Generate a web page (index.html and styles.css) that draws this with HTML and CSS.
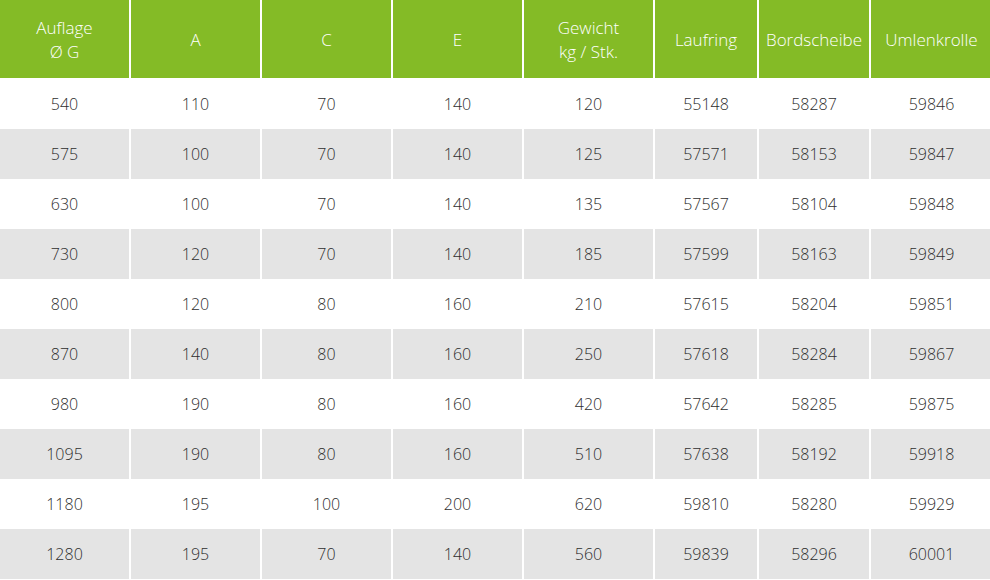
FILE: index.html
```html
<!DOCTYPE html>
<html lang="de">
<head>
<meta charset="utf-8">
<link rel="stylesheet" href="styles.css">
</head>
<body>
<div class="table">
  <div class="head">Auflage<br>Ø G</div>
  <div class="head">A</div>
  <div class="head">C</div>
  <div class="head">E</div>
  <div class="head">Gewicht<br>kg / Stk.</div>
  <div class="head">Laufring</div>
  <div class="head">Bordscheibe</div>
  <div class="head">Umlenkrolle</div>

  <div class="c">540</div><div class="c">110</div><div class="c">70</div><div class="c">140</div><div class="c">120</div><div class="c">55148</div><div class="c">58287</div><div class="c">59846</div>
  <div class="c g">575</div><div class="c g">100</div><div class="c g">70</div><div class="c g">140</div><div class="c g">125</div><div class="c g">57571</div><div class="c g">58153</div><div class="c g">59847</div>
  <div class="c">630</div><div class="c">100</div><div class="c">70</div><div class="c">140</div><div class="c">135</div><div class="c">57567</div><div class="c">58104</div><div class="c">59848</div>
  <div class="c g">730</div><div class="c g">120</div><div class="c g">70</div><div class="c g">140</div><div class="c g">185</div><div class="c g">57599</div><div class="c g">58163</div><div class="c g">59849</div>
  <div class="c">800</div><div class="c">120</div><div class="c">80</div><div class="c">160</div><div class="c">210</div><div class="c">57615</div><div class="c">58204</div><div class="c">59851</div>
  <div class="c g">870</div><div class="c g">140</div><div class="c g">80</div><div class="c g">160</div><div class="c g">250</div><div class="c g">57618</div><div class="c g">58284</div><div class="c g">59867</div>
  <div class="c">980</div><div class="c">190</div><div class="c">80</div><div class="c">160</div><div class="c">420</div><div class="c">57642</div><div class="c">58285</div><div class="c">59875</div>
  <div class="c g">1095</div><div class="c g">190</div><div class="c g">80</div><div class="c g">160</div><div class="c g">510</div><div class="c g">57638</div><div class="c g">58192</div><div class="c g">59918</div>
  <div class="c">1180</div><div class="c">195</div><div class="c">100</div><div class="c">200</div><div class="c">620</div><div class="c">59810</div><div class="c">58280</div><div class="c">59929</div>
  <div class="c g">1280</div><div class="c g">195</div><div class="c g">70</div><div class="c g">140</div><div class="c g">560</div><div class="c g">59839</div><div class="c g">58296</div><div class="c g">60001</div>
</div>
</body>
</html>
```
FILE: styles.css
```css
html, body {
  margin: 0;
  padding: 0;
  background: #ffffff;
}
.table {
  display: grid;
  grid-template-columns: 129px 129px 129px 129px 129px 102px 110px 121px;
  grid-template-rows: 79px repeat(10, 50px);
  column-gap: 2px;
  row-gap: 0;
  width: 990px;
  font-family: "Open Sans", "Noto Sans", sans-serif;
  font-weight: 300;
  font-size: 16px;
}
.head {
  background: #84bb26;
  color: #ffffff;
  display: flex;
  align-items: center;
  justify-content: center;
  text-align: center;
  font-size: 17px;
  line-height: 24px;
  height: 78px;
  padding-top: 2px;
  box-sizing: border-box;
}
.c {
  display: flex;
  align-items: center;
  justify-content: center;
  color: #2e2e2e;
  background: #ffffff;
}
.c.g {
  background: #e4e4e4;
}
```
